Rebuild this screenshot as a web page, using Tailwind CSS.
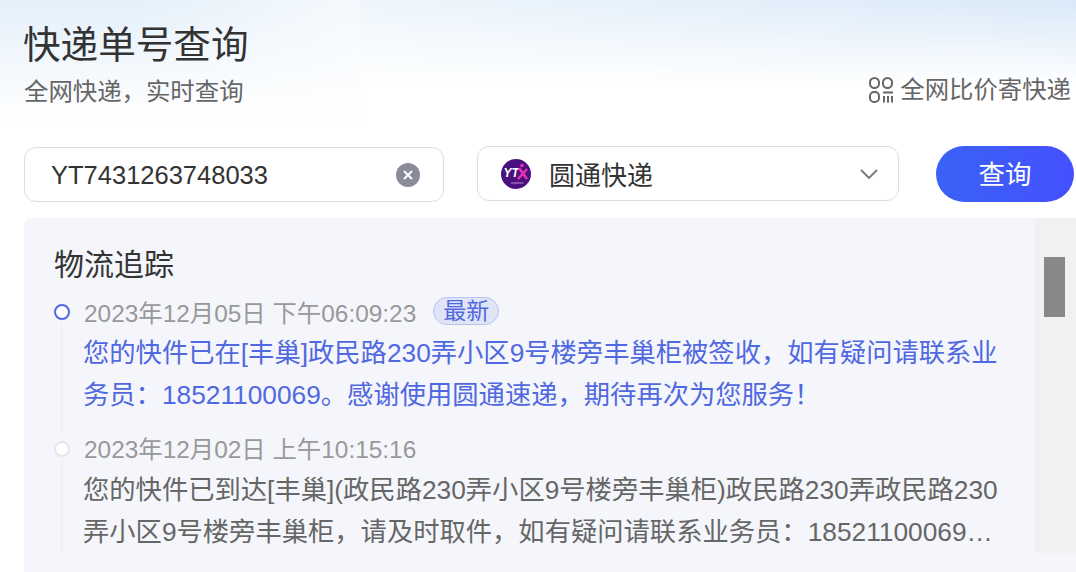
<!DOCTYPE html>
<html lang="zh-CN">
  <head>
    <meta charset="utf-8" />
    <title>快递单号查询</title>
    <script src="https://cdn.jsdelivr.net/npm/@tailwindcss/browser@4"></script>
  </head>
  <body class="bg-white overflow-hidden font-['Liberation_Sans','Noto_Sans_CJK_SC',sans-serif]">
    <div class="w-[1076px] h-[572px] overflow-hidden">
      <!-- Banner -->
      <div class="flex h-[146px]">
        <div class="w-[361px] pl-6 pt-[20px] bg-[linear-gradient(to_right,transparent_35%,#ffffffa0),linear-gradient(to_bottom,#e4f0fa_0%,#f3f8fd_45%,#ffffff_85%)]">
          <h1 class="-ml-px text-[37.600px] leading-[50px] text-[#333]">快递单号查询</h1>
          <p class="mt-[4px] text-[24.400px] leading-[36px] text-[#666]">全网快递，实时查询</p>
        </div>
        <div class="flex-1 flex justify-end pt-[72px] pr-[5px] bg-[linear-gradient(to_bottom,transparent,#ffffff_60%),linear-gradient(to_right,#eef6fc,#d9e9f8)]">
          <div class="flex items-center gap-[7px] h-[36px] text-[24.400px] text-[#666]">
            <svg class="w-[24px] h-[26px]" viewBox="0 0 24 26" fill="none" stroke="#666" stroke-width="2">
              <rect x="1" y="1" width="9" height="10" rx="4.500" />
              <rect x="14" y="1" width="9" height="10" rx="4.500" />
              <rect x="1" y="15" width="9" height="10" rx="4" />
              <path d="M14 15.500h10M15 19v6.500M19 19v6.500M23 19v6.500" />
            </svg>
            <span>全网比价寄快递</span>
          </div>
        </div>
      </div>

      <!-- Search row -->
      <div class="flex items-start pl-6 h-[72px]">
        <div class="flex items-center w-[420px] h-[55px] mt-[1px] pl-[26px] pr-[23px] bg-white border border-[#ddd] rounded-xl">
          <input class="flex-1 min-w-0 pt-[2px] text-[25.500px] text-[#333] outline-none" value="YT7431263748033" />
          <span class="flex items-center justify-center w-6 h-6 rounded-full bg-[#8a8b99]">
            <svg class="w-3 h-3" viewBox="0 0 12 12" stroke="#fff" stroke-width="2"><path d="M2 2l8 8M10 2l-8 8" /></svg>
          </span>
        </div>
        <div class="flex items-center w-[422px] h-[55px] ml-[33px] pl-[23px] pr-[19px] bg-white border border-[#ddd] rounded-xl">
          <svg class="w-[30px] h-[30px]" viewBox="0 0 30 30">
            <circle cx="15" cy="15" r="15" fill="#4a1080" />
            <text x="2.500" y="18" font-size="12" font-weight="700" font-style="italic" fill="#fff" font-family="Liberation Sans">YT</text>
            <path d="M18 9l8 11M26 10l-9 10" stroke="#e832b4" stroke-width="2.500" fill="none" />
            <circle cx="21" cy="6.500" r="1.800" fill="#e832b4" />
            <text x="10" y="24.500" font-size="3.500" fill="#e9b6e6" font-family="Liberation Sans">express</text>
          </svg>
          <span class="ml-[18px] flex-1 pt-[5px] text-[26px] text-[#333]">圆通快递</span>
          <svg class="w-[20px] h-[12px]" viewBox="0 0 20 12" fill="none" stroke="#777" stroke-width="1.800"><path d="M2 2l8 8 8-8" /></svg>
        </div>
        <button class="w-[138px] h-[56px] ml-[37px] pt-[3px] rounded-full bg-gradient-to-r from-[#3a62f5] to-[#4450ff] text-white text-[26.500px]">查询</button>
      </div>

      <!-- Tracking panel -->
      <div class="flex items-start justify-between ml-6 h-[354px] bg-[#f5f6fb] rounded-tl-lg">
        <div class="pl-[30px] pt-[25px]">
          <h2 class="text-[30px] leading-[44px] text-[#333]">物流追踪</h2>
          <div class="flex mt-[12px]">
            <div class="flex flex-col items-center w-[15px] mr-[15px] mt-[5px]">
              <span class="w-4 h-4 shrink-0 rounded-full border-2 border-[#5068e0] bg-white"></span>
              <span class="flex-1 mt-[3px] border-l border-dotted border-[#e4e5ec]"></span>
            </div>
            <div class="w-[916px] pb-[19px]">
              <div class="flex items-center h-[30px] text-[24.400px] text-[#999]">
                <span>2023年12月05日 下午06:09:23</span>
                <span class="w-[66px] h-[28px] ml-[17px] -mt-[6px] text-center leading-[26px] text-[23px] text-[#5068e0] bg-[#dfe4f6] border border-[#b9c3ee] rounded-full">最新</span>
              </div>
              <p class="mt-[3px] -ml-px text-[26.300px] leading-[42px] text-[#5068e0]">您的快件已在[丰巢]政民路230弄小区9号楼旁丰巢柜被签收，如有疑问请联系业务员：18521100069。感谢使用圆通速递，期待再次为您服务！</p>
            </div>
          </div>
          <div class="flex">
            <div class="flex flex-col items-center w-[15px] mr-[15px] mt-[6px]">
              <span class="w-4 h-4 shrink-0 rounded-full border-2 border-[#e6e6e6] bg-white"></span>
              <span class="flex-1 mt-[3px] border-l border-dotted border-[#e4e5ec]"></span>
            </div>
            <div class="w-[916px]">
              <div class="flex items-center h-[30px] text-[24.400px] text-[#999]">2023年12月02日 上午10:15:16</div>
              <p class="mt-[4px] -ml-px line-clamp-2 text-[26.300px] leading-[42px] text-[#666]">您的快件已到达[丰巢](政民路230弄小区9号楼旁丰巢柜)政民路230弄政民路230弄小区9号楼旁丰巢柜，请及时取件，如有疑问请联系业务员：18521100069。感谢使用圆通速递，期待再次为您服务！</p>
            </div>
          </div>
        </div>
        <!-- Scrollbar -->
        <div class="w-[41px] h-[335px] pt-[39px] pl-[9px] bg-[#f1f1f1]">
          <div class="w-[21px] h-[60px] bg-[#888]"></div>
        </div>
      </div>
    </div>
  </body>
</html>
